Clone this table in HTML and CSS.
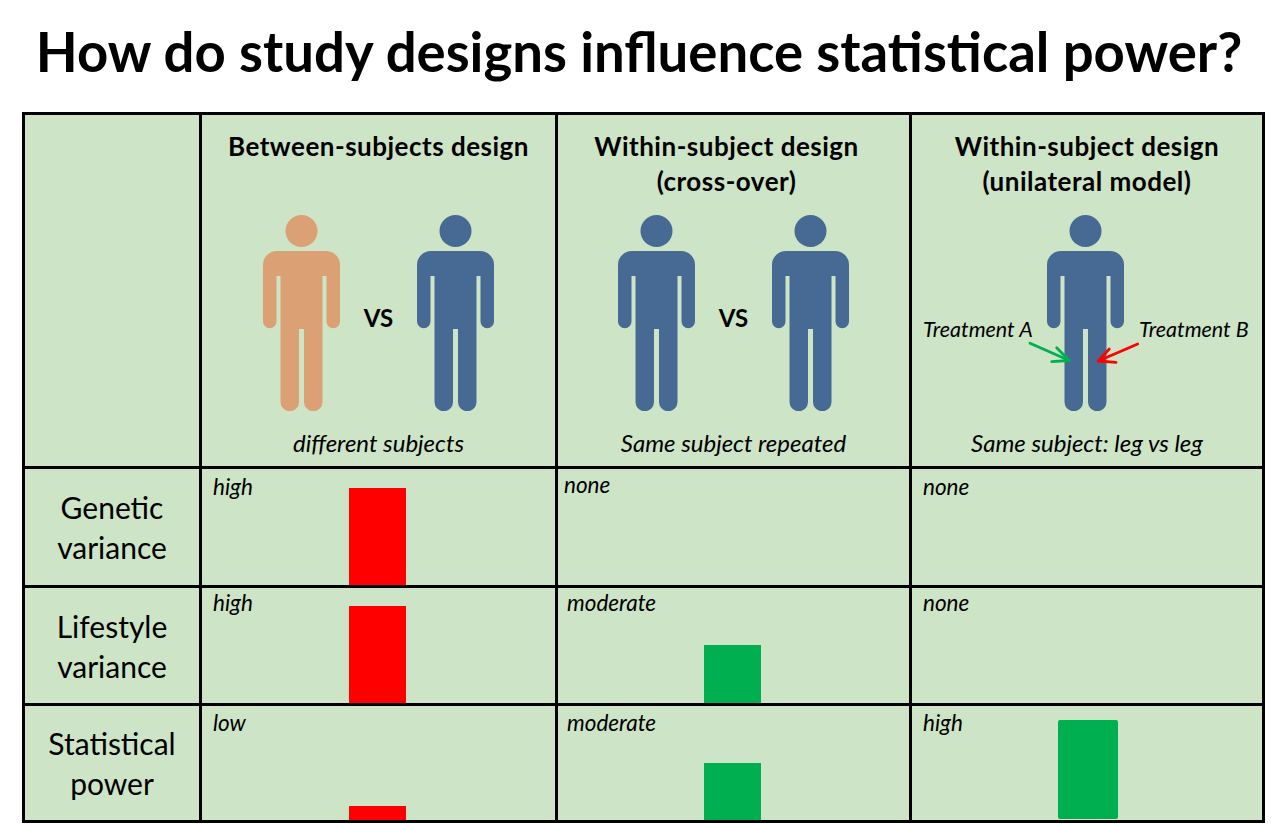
FILE: index.html
```html
<!DOCTYPE html>
<html lang="en">
<head>
<meta charset="utf-8">
<title>How do study designs influence statistical power?</title>
<link rel="stylesheet" href="styles.css">
</head>
<body>
<h1 class="title">How do study designs influence statistical power?</h1>
<div class="grid">
  <div class="cell corner"></div>

  <div class="cell design">
    <h2 class="design-title">Between-subjects design</h2>
    <div class="figures">
      <svg class="person orange" viewBox="0 0 77 196" width="77" height="196"><circle cx="38.5" cy="16" r="16"/><path d="M0 50A14 14 0 0 1 14 36H63A14 14 0 0 1 77 50V106.5A6.75 6.75 0 0 1 63.5 106.5V61H59.5V187A9.25 9.25 0 0 1 41 187V114H36V187A9.25 9.25 0 0 1 17.5 187V61H13.5V106.5A6.75 6.75 0 0 1 0 106.5Z"/></svg>
      <span class="vs">VS</span>
      <svg class="person blue" viewBox="0 0 77 196" width="77" height="196"><circle cx="38.5" cy="16" r="16"/><path d="M0 50A14 14 0 0 1 14 36H63A14 14 0 0 1 77 50V106.5A6.75 6.75 0 0 1 63.5 106.5V61H59.5V187A9.25 9.25 0 0 1 41 187V114H36V187A9.25 9.25 0 0 1 17.5 187V61H13.5V106.5A6.75 6.75 0 0 1 0 106.5Z"/></svg>
    </div>
    <p class="caption">different subjects</p>
  </div>

  <div class="cell design">
    <h2 class="design-title shift-left">Within-subject design<br>(cross-over)</h2>
    <div class="figures">
      <svg class="person blue" viewBox="0 0 77 196" width="77" height="196"><circle cx="38.5" cy="16" r="16"/><path d="M0 50A14 14 0 0 1 14 36H63A14 14 0 0 1 77 50V106.5A6.75 6.75 0 0 1 63.5 106.5V61H59.5V187A9.25 9.25 0 0 1 41 187V114H36V187A9.25 9.25 0 0 1 17.5 187V61H13.5V106.5A6.75 6.75 0 0 1 0 106.5Z"/></svg>
      <span class="vs">VS</span>
      <svg class="person blue" viewBox="0 0 77 196" width="77" height="196"><circle cx="38.5" cy="16" r="16"/><path d="M0 50A14 14 0 0 1 14 36H63A14 14 0 0 1 77 50V106.5A6.75 6.75 0 0 1 63.5 106.5V61H59.5V187A9.25 9.25 0 0 1 41 187V114H36V187A9.25 9.25 0 0 1 17.5 187V61H13.5V106.5A6.75 6.75 0 0 1 0 106.5Z"/></svg>
    </div>
    <p class="caption">Same subject repeated</p>
  </div>

  <div class="cell design">
    <h2 class="design-title">Within-subject design<br>(unilateral model)</h2>
    <div class="unilateral">
      <svg class="uni-art" viewBox="0 0 350 196" width="350" height="196">
        <g class="blue" transform="translate(135 0)"><circle cx="38.5" cy="16" r="16"/><path d="M0 50A14 14 0 0 1 14 36H63A14 14 0 0 1 77 50V106.5A6.75 6.75 0 0 1 63.5 106.5V61H59.5V187A9.25 9.25 0 0 1 41 187V114H36V187A9.25 9.25 0 0 1 17.5 187V61H13.5V106.5A6.75 6.75 0 0 1 0 106.5Z"/></g>
        <g class="arrow green-arrow"><path d="M118 128.3L157.3 145.5"/><path d="M144.7 132.7L157.3 145.5L139.7 146.7"/></g>
        <g class="arrow red-arrow"><path d="M225.7 129L186.3 146"/><path d="M197.3 134L186.3 146L204 147.3"/></g>
      </svg>
      <span class="treat treat-a">Treatment A</span>
      <span class="treat treat-b">Treatment B</span>
    </div>
    <p class="caption">Same subject: leg vs leg</p>
  </div>

  <div class="cell rowhead">Genetic<br>variance</div>
  <div class="cell data"><span class="level low-row">high</span><div class="bar red" style="height:97px"></div></div>
  <div class="cell data"><span class="level near">none</span></div>
  <div class="cell data"><span class="level low-row">none</span></div>

  <div class="cell rowhead">Lifestyle<br>variance</div>
  <div class="cell data"><span class="level">high</span><div class="bar red" style="height:97px"></div></div>
  <div class="cell data"><span class="level mid">moderate</span><div class="bar green" style="height:58px"></div></div>
  <div class="cell data"><span class="level">none</span></div>

  <div class="cell rowhead">Statistical<br>power</div>
  <div class="cell data"><span class="level lower">low</span><div class="bar red" style="height:14px"></div></div>
  <div class="cell data"><span class="level mid lower">moderate</span><div class="bar green" style="height:57px"></div></div>
  <div class="cell data"><span class="level lower">high</span><div class="bar green wide" style="height:99px"></div></div>
</div>
</body>
</html>
```
FILE: styles.css
```css
html, body {
  margin: 0;
  padding: 0;
  background: #ffffff;
}
body {
  font-family: Lato, "Open Sans", "Liberation Sans", sans-serif;
  color: #000;
  width: 1286px;
  height: 824px;
  overflow: hidden;
}
.title {
  margin: 0;
  height: 112px;
  box-sizing: border-box;
  padding: 19px 8px 0 0;
  font-size: 54.5px;
  line-height: 64px;
  font-weight: 700;
  text-align: center;
  white-space: nowrap;
}
.grid {
  margin-left: 22px;
  width: 1243px;
  box-sizing: border-box;
  display: grid;
  grid-template-columns: 174px 353px 351px 350px;
  grid-template-rows: 351px 116px 115px 114px;
  gap: 3px;
  padding: 3px;
  background: #000;
}
.cell {
  background: #cde4c6;
}
.design {
  display: flex;
  flex-direction: column;
  align-items: center;
  padding-top: 14px;
}
.design-title {
  margin: 0;
  height: 70px;
  font-size: 26px;
  letter-spacing: 0.5px;
  line-height: 35px;
  font-weight: 700;
  text-align: center;
  white-space: nowrap;
}
.design-title.shift-left {
  padding-right: 14px;
}
.figures {
  margin-top: 16px;
  display: flex;
  align-items: center;
  height: 196px;
}
.person {
  display: block;
}
.orange { fill: #dba074; }
.blue { fill: #466a93; }
.vs {
  width: 77px;
  text-align: center;
  font-size: 24px;
  font-weight: 700;
  margin-top: 8px;
}
.caption {
  margin: 17px 0 0;
  font-size: 24px;
  line-height: 30px;
  font-style: italic;
  white-space: nowrap;
}
.unilateral {
  position: relative;
  margin-top: 16px;
  width: 350px;
  height: 196px;
}
.uni-art {
  display: block;
}
.arrow {
  fill: none;
  stroke-width: 2.8;
  stroke-linecap: round;
  stroke-linejoin: round;
}
.green-arrow { stroke: #00b050; }
.red-arrow { stroke: #ff0000; }
.treat {
  position: absolute;
  top: 103px;
  font-size: 21.5px;
  line-height: 22px;
  font-style: italic;
  white-space: nowrap;
}
.treat-a { left: 11px; }
.treat-b { left: 227px; }
.rowhead {
  display: flex;
  align-items: center;
  justify-content: center;
  text-align: center;
  font-size: 30px;
  line-height: 40px;
}
.data {
  display: grid;
  grid-template-columns: 1fr;
  grid-template-rows: 1fr;
}
.level {
  grid-area: 1 / 1;
  align-self: start;
  justify-self: start;
  margin: 3px 0 0 11px;
  font-size: 22.5px;
  line-height: 24px;
  font-style: italic;
}
.level.low-row { margin-top: 6px; }
.level.near { margin: 4px 0 0 6px; }
.level.mid { margin-left: 9px; }
.level.lower { margin-top: 5px; }
.bar {
  grid-area: 1 / 1;
  align-self: end;
  justify-self: start;
  margin-left: 147px;
  width: 57px;
}
.bar.red { background: #ff0000; }
.bar.green {
  background: #00b050;
  margin-left: 146px;
}
.bar.wide {
  width: 60px;
  margin-bottom: 1px;
  border-radius: 2px;
}
```
